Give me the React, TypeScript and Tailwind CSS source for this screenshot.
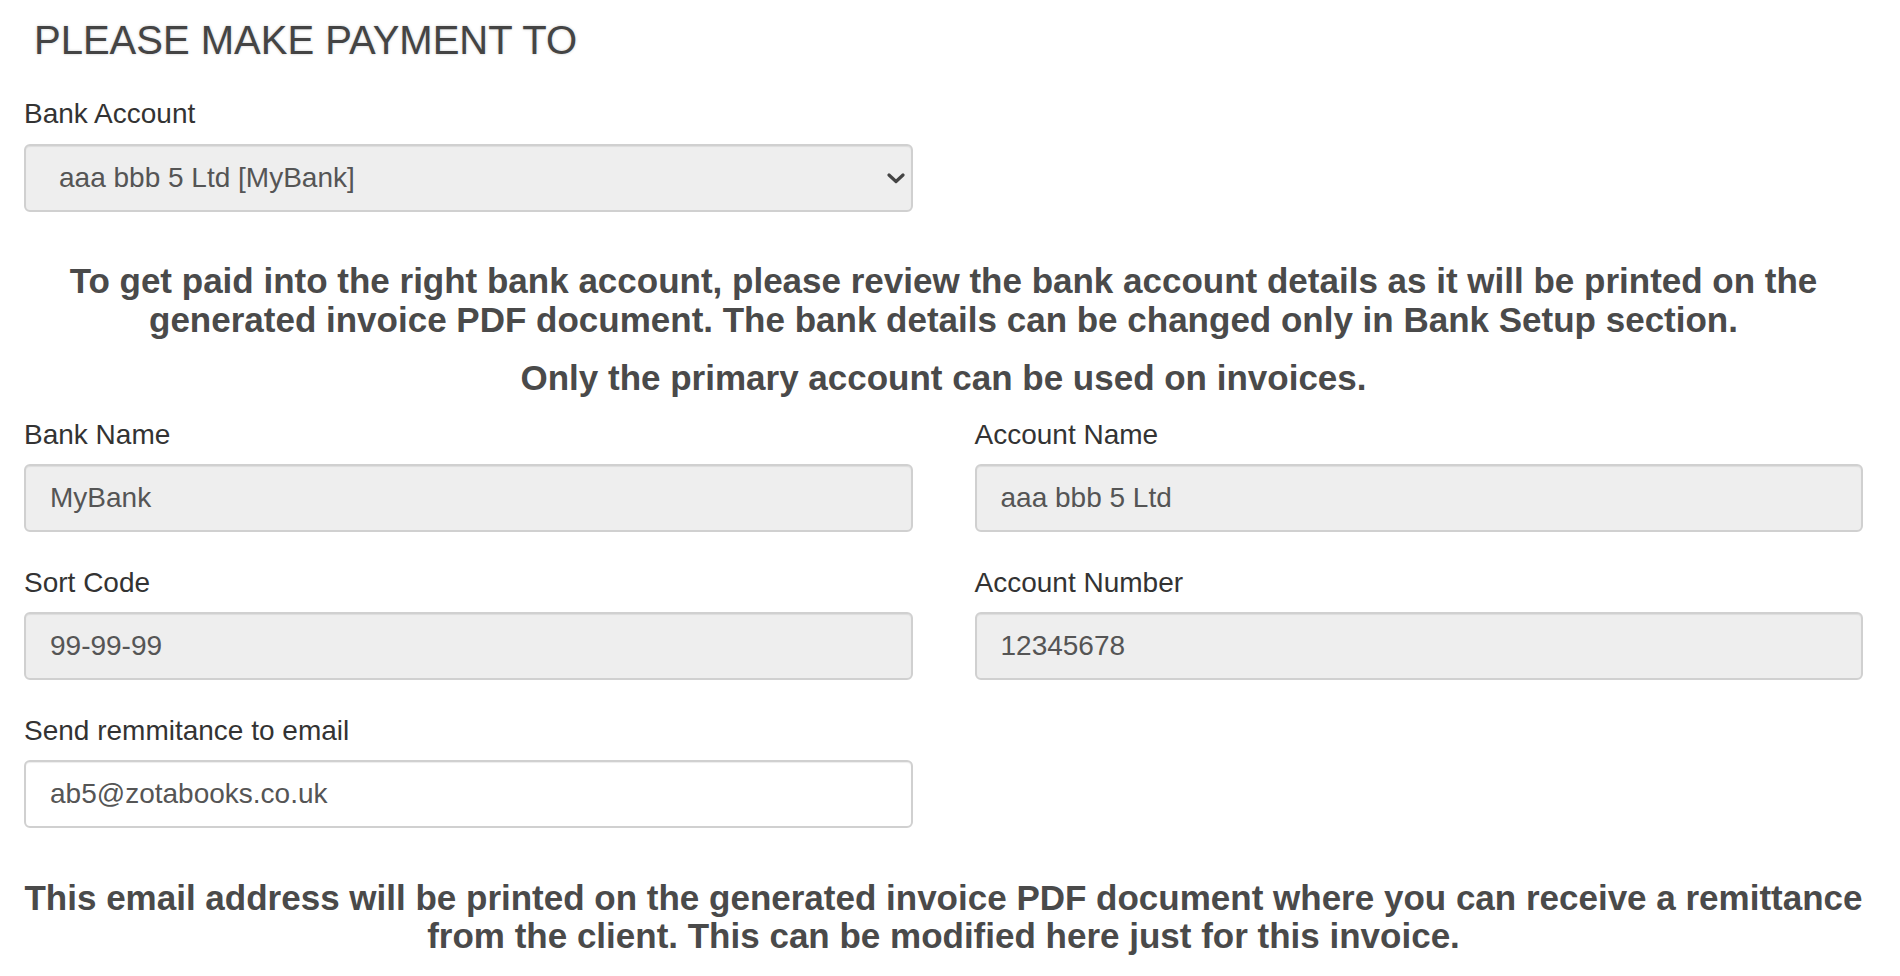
import React from "react";

const font = { fontFamily: '"Liberation Sans", Arial, Helvetica, sans-serif' };

type FieldProps = {
  label: string;
  value: string;
  editable?: boolean;
};

function Field({ label, value, editable }: FieldProps) {
  return (
    <div className="flex flex-col">
      <label className="text-[28px] leading-[40px] text-[#333] mb-[9px]">{label}</label>
      <input
        readOnly
        value={value}
        className={
          editable
            ? "h-[68px] w-full rounded-[6px] border-2 border-[#d0d0d0] bg-white px-[24px] text-[28px] text-[#555] shadow-[inset_0_1px_1px_rgba(0,0,0,0.075)] outline-none"
            : "h-[68px] w-full rounded-[6px] border-2 border-[#d0d0d0] bg-[#eeeeee] px-[24px] text-[28px] text-[#555] shadow-[inset_0_1px_1px_rgba(0,0,0,0.075)] outline-none"
        }
      />
    </div>
  );
}

export default function App() {
  return (
    <div style={font} className="w-[1900px] min-h-[976px] bg-white pl-[24px] pr-[37px] pt-[16px]">
      <h3 className="pl-[10px] text-[40px] leading-[48px] font-normal text-[#444] [text-shadow:0_0_3px_rgba(0,0,0,0.2)]">
        PLEASE MAKE PAYMENT TO
      </h3>

      {/* Bank account picker */}
      <div className="mt-[30px] w-[889px] flex flex-col">
        <label className="text-[28px] leading-[40px] text-[#333] mb-[10px]">Bank Account</label>
        <div className="relative">
          <select
            defaultValue="1"
            className="h-[68px] w-full appearance-none rounded-[6px] border-2 border-[#d0d0d0] bg-[#eeeeee] pl-[33px] pr-[40px] text-[28px] text-[#555] shadow-[inset_0_1px_1px_rgba(0,0,0,0.075)] outline-none"
            style={font}
          >
            <option value="1">aaa bbb 5 Ltd [MyBank]</option>
          </select>
          <svg
            className="pointer-events-none absolute right-[8px] top-[29px]"
            width="18"
            height="11"
            viewBox="0 0 18 11"
          >
            <polyline points="2,2 9,8.5 16,2" fill="none" stroke="#444" strokeWidth="3.2" strokeLinecap="round" strokeLinejoin="round" />
          </svg>
        </div>
      </div>

      <p className="mt-[49px] text-center text-[35px] leading-[39px] font-bold text-[#4a4a4a]">
        To get paid into the right bank account, please review the bank account details as it will be printed on the
        <br />
        generated invoice PDF document. The bank details can be changed only in Bank Setup section.
      </p>
      <p className="mt-[19px] text-center text-[35px] leading-[39px] font-bold text-[#4a4a4a]">
        Only the primary account can be used on invoices.
      </p>

      <div className="mt-[18px] grid grid-cols-2 gap-x-[62px] gap-y-[31px]">
        <Field label="Bank Name" value="MyBank" />
        <Field label="Account Name" value="aaa bbb 5 Ltd" />
        <Field label="Sort Code" value="99-99-99" />
        <Field label="Account Number" value="12345678" />
        <Field label="Send remmitance to email" value="ab5@zotabooks.co.uk" editable />
      </div>

      <p className="mt-[51px] text-center text-[35px] leading-[38px] font-bold text-[#4a4a4a]">
        This email address will be printed on the generated invoice PDF document where you can receive a remittance
        <br />
        from the client. This can be modified here just for this invoice.
      </p>
    </div>
  );
}
